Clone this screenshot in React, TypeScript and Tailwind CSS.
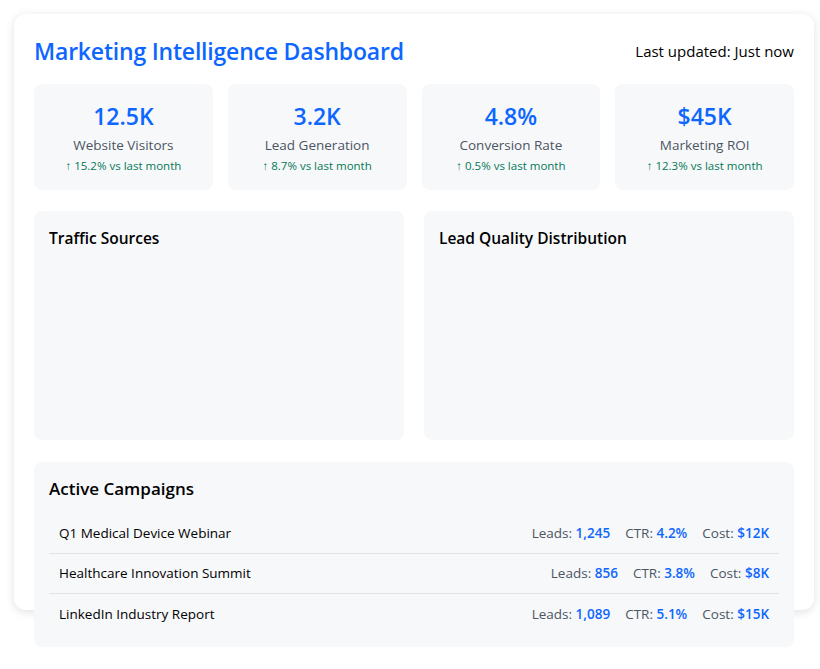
const stats = [
  { value: "12.5K", label: "Website Visitors", change: "15.2%" },
  { value: "3.2K", label: "Lead Generation", change: "8.7%" },
  { value: "4.8%", label: "Conversion Rate", change: "0.5%" },
  { value: "$45K", label: "Marketing ROI", change: "12.3%" },
];

const campaigns = [
  { name: "Q1 Medical Device Webinar", leads: "1,245", ctr: "4.2%", cost: "$12K" },
  { name: "Healthcare Innovation Summit", leads: "856", ctr: "3.8%", cost: "$8K" },
  { name: "LinkedIn Industry Report", leads: "1,089", ctr: "5.1%", cost: "$15K" },
];

export default function App() {
  return (
    <div className="min-h-screen bg-white pt-[14px] pl-[14px]" style={{ fontFamily: '"Open Sans", "Noto Sans", sans-serif' }}>
      <div className="w-[800px] h-[596px] rounded-xl bg-white px-5 pt-5 shadow-[0_2px_10px_rgba(0,0,0,0.12)]">
        {/* Header */}
        <div className="flex items-center justify-between h-[32px] mt-[1px]">
          <h1 className="text-[23px] font-semibold text-[#0d66ff] tracking-[-0.2px]">Marketing Intelligence Dashboard</h1>
          <span className="text-[15px] text-black">Last updated: Just now</span>
        </div>

        {/* Stats */}
        <div className="grid grid-cols-4 gap-[15px] mt-[17px]">
          {stats.map((s) => (
            <div key={s.label} className="h-[106px] rounded-lg bg-[#f7f8fa] flex flex-col items-center pt-[16px]">
              <div className="text-[23px] leading-[32px] font-semibold text-[#0d66ff]">{s.value}</div>
              <div className="text-[13.5px] leading-[20px] text-[#4b5563] mt-[3px]">{s.label}</div>
              <div className="text-[11.5px] leading-[16px] text-[#047857] mt-[3px]">↑ {s.change} vs last month</div>
            </div>
          ))}
        </div>

        {/* Charts */}
        <div className="grid grid-cols-2 gap-5 mt-[21px]">
          {["Traffic Sources", "Lead Quality Distribution"].map((t) => (
            <div key={t} className="h-[229px] rounded-lg bg-[#f7f8fa] p-[15px]">
              <h2 className="text-[15.5px] font-semibold text-black leading-[24px]">{t}</h2>
            </div>
          ))}
        </div>

        {/* Campaigns */}
        <div className="mt-[22px] rounded-lg bg-[#f7f8fa] px-[15px] pt-[15px] pb-[13px]">
          <h2 className="text-[17px] font-semibold text-black leading-[24px]">Active Campaigns</h2>
          <div className="mt-[13px]">
            {campaigns.map((c, i) => (
              <div key={c.name} className={`flex items-center justify-between h-[40px] px-[10px] text-[13.5px] ${i < campaigns.length - 1 ? "border-b border-[#dfe2e6]" : ""}`}>
                <span className="text-black">{c.name}</span>
                <div className="flex gap-[15px] text-[#4b5563]">
                  <span>Leads: <span className="font-semibold text-[#0d66ff]">{c.leads}</span></span>
                  <span>CTR: <span className="font-semibold text-[#0d66ff]">{c.ctr}</span></span>
                  <span>Cost: <span className="font-semibold text-[#0d66ff]">{c.cost}</span></span>
                </div>
              </div>
            ))}
          </div>
        </div>
      </div>
    </div>
  );
}
